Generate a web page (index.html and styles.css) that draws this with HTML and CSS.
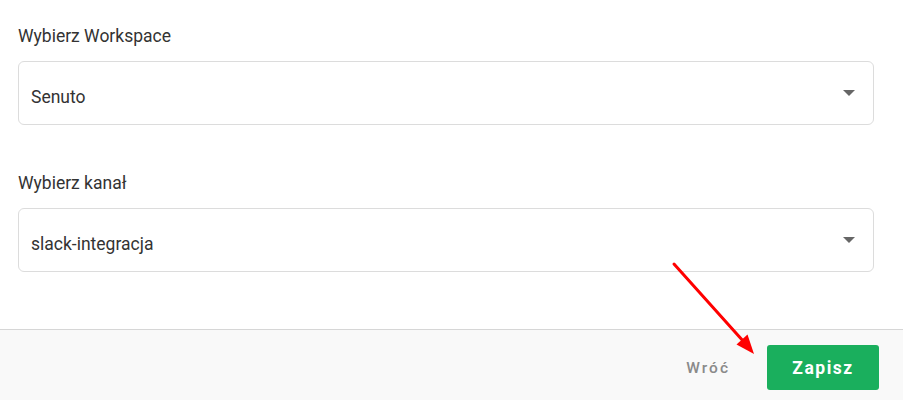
FILE: index.html
```html
<!DOCTYPE html>
<html>
    <head>
        <title>
            Slack integracja
        </title>
        <link rel="stylesheet" href="styles.css">
    </head>
    <body>
        <div class="modal">
            <div class="modal-body">
                <div class="field">
                    <label class="field-label">Wybierz Workspace</label>
                    <div class="select">
                        <span class="select-value">Senuto</span>
                        <span class="select-caret"></span>
                    </div>
                </div>
                <div class="field">
                    <label class="field-label">Wybierz kanał</label>
                    <div class="select">
                        <span class="select-value">slack-integracja</span>
                        <span class="select-caret"></span>
                    </div>
                </div>
            </div>
            <div class="modal-footer">
                <button type="button" class="btn-back">Wróć</button>
                <button type="button" class="btn-save">Zapisz</button>
            </div>
            <svg class="annotation" width="903" height="400" viewBox="0 0 903 400">
                <line x1="674" y1="264" x2="744" y2="342" stroke="#ff0000" stroke-width="3" stroke-linecap="round"/>
                <polygon points="754,354 736.5,344.5 747.5,334.5" fill="#ff0000"/>
            </svg>
        </div>
    </body>
</html>
```

FILE: styles.css
```css
body{
    margin: 0;
    background-color: white;
    font-family: Roboto, "Liberation Sans", sans-serif;
}
.modal{
    position: relative;
    width: 903px;
    height: 400px;
    overflow: hidden;
}
.modal-body{
    display: flex;
    flex-direction: column;
    gap: 48px;
    padding: 26px 29px 57px 18px;
}
.field-label{
    display: block;
    font-size: 17.5px;
    line-height: 21px;
    color: #333333;
    margin-bottom: 14px;
}
.select{
    display: flex;
    align-items: flex-start;
    justify-content: space-between;
    height: 62px;
    box-sizing: content-box;
    border: 1px solid #dcdcdc;
    border-radius: 6px;
}
.select-value{
    font-size: 17.5px;
    line-height: 21px;
    color: #333333;
    padding: 25px 0 0 12px;
}
.select-caret{
    width: 0;
    height: 0;
    margin: 28px 18px 0 0;
    border-left: 6px solid transparent;
    border-right: 6px solid transparent;
    border-top: 6px solid #666666;
}
.modal-footer{
    display: flex;
    justify-content: flex-end;
    align-items: flex-start;
    gap: 37px;
    height: 71px;
    box-sizing: border-box;
    padding: 15px 24px 0 0;
    border-top: 1px solid #d6d6d6;
    background-color: #f9f9f9;
}
.btn-back{
    border: none;
    background: none;
    padding: 0;
    margin-top: 14px;
    font-family: Roboto, "Liberation Sans", sans-serif;
    font-size: 15.5px;
    font-weight: 500;
    letter-spacing: 2px;
    color: #8a8a8a;
    cursor: pointer;
}
.btn-save{
    width: 112px;
    height: 45px;
    border: none;
    border-radius: 3px;
    background-color: #1aaf5d;
    color: white;
    font-family: Roboto, "Liberation Sans", sans-serif;
    font-size: 17.5px;
    font-weight: 700;
    letter-spacing: 1.5px;
    cursor: pointer;
}
.annotation{
    position: absolute;
    top: 0;
    left: 0;
    pointer-events: none;
}
```
